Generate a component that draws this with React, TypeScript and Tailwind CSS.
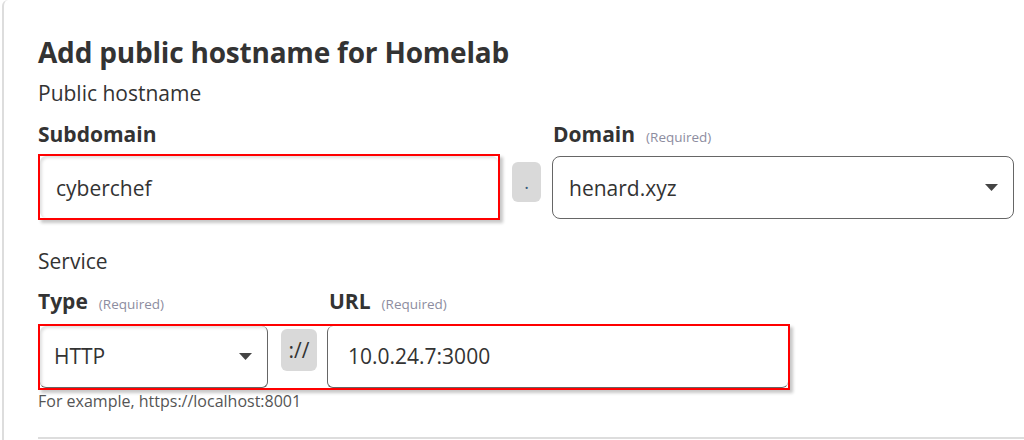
import React from 'react';

function Caret() {
  return (
    <svg width="13" height="7" viewBox="0 0 13 7" className="shrink-0">
      <path d="M0 0 H13 L6.5 7 Z" fill="#444" />
    </svg>
  );
}

function Req() {
  return <span className="ml-[11px] text-[13.5px] font-normal text-[#8d8da0]">(Required)</span>;
}

export default function App() {
  return (
    <div className="w-[1024px] h-[440px] overflow-hidden bg-white font-['Open_Sans',sans-serif] text-[#333]">
      <div className="ml-[2px] h-[440px] border-l-2 border-[#ddd] rounded-tl-md pl-[34px] flex flex-col">
        <h1 className="mt-[32px] h-[40px] text-[28px] font-bold leading-[40px] tracking-[-0.2px]">
          Add public hostname for Homelab
        </h1>
        <div className="mt-[6px] h-[30px] text-[21px] leading-[30px]">Public hostname</div>

        <div className="flex items-start w-[976px] mt-[11px]">
          <div className="w-[462px] flex flex-col">
            <div className="h-[30px] mb-[5px] text-[21px] font-bold leading-[30px]">Subdomain</div>
            <div className="h-[66px] border-2 border-[#f00] shadow-[3px_3px_3px_rgba(0,0,0,0.22)]">
              <div className="h-full rounded-md bg-white shadow-[inset_2px_2px_3px_rgba(0,0,0,0.12)] flex items-center pl-[16px] pt-[3px] text-[21px]">
                cyberchef
              </div>
            </div>
          </div>
          <div className="ml-[12px] mt-[43px] w-[29px] h-[40px] rounded-md bg-[#d9d9d9] flex items-center justify-center text-[18px] text-[#3a5a7a]">
            .
          </div>
          <div className="ml-[11px] w-[462px] flex flex-col">
            <div className="h-[30px] mb-[7px] text-[21px] font-bold leading-[30px] pl-[1px] flex items-baseline">
              Domain<Req />
            </div>
            <div className="h-[63px] rounded-lg border border-[#666] flex items-center justify-between pl-[16px] pr-[15px] text-[21px]">
              <span className="pt-[2px]">henard.xyz</span>
              <Caret />
            </div>
          </div>
        </div>

        <div className="mt-[26px] h-[30px] text-[21px] leading-[30px]">Service</div>

        <div className="mt-[10px] flex h-[30px] text-[21px] font-bold leading-[30px]">
          <div className="w-[291px] flex items-baseline">Type<Req /></div>
          <div className="flex items-baseline">URL<Req /></div>
        </div>

        <div className="mt-[8px] w-[752px] h-[66px] border-2 border-[#f00] shadow-[3px_3px_3px_rgba(0,0,0,0.22)] flex items-stretch">
          <div className="w-[228px] rounded-md border-r border-b border-[#666] shadow-[inset_2px_2px_3px_rgba(0,0,0,0.12)] flex items-center justify-between pl-[14px] pr-[15px] text-[21px]">
            <span>HTTP</span>
            <Caret />
          </div>
          <div className="ml-[13px] mt-[3px] w-[36px] h-[42px] rounded-md bg-[#d9d9d9] flex items-center justify-center pt-[2px] text-[21px] text-[#333]">
            ://
          </div>
          <div className="ml-[10px] flex-1 rounded-md border-l border-b border-[#666] flex items-center pl-[20px] text-[21px]">
            10.0.24.7:3000
          </div>
        </div>

        <div className="mt-[1px] h-[20px] text-[16px] leading-[20px] text-[#555]">For example, https://localhost:8001</div>

        <div className="mt-[26px] h-[2px] bg-[#ddd]" />
      </div>
    </div>
  );
}
